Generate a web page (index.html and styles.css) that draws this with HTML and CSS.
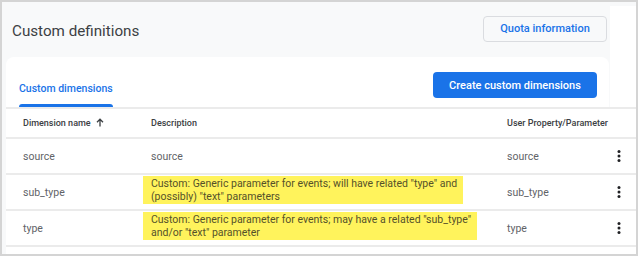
FILE: index.html
```html
<!DOCTYPE html>
<html>
<head>
<meta charset="utf-8">
<link rel="stylesheet" href="styles.css">
</head>
<body>
<div class="frame">
  <div class="top">
    <div class="main">
      <div class="head">
        <h1 class="title">Custom definitions</h1>
        <button class="btn-outline">Quota information</button>
      </div>
      <div class="card">
        <div class="tab">
          <span class="tab-label">Custom dimensions</span>
          <span class="tab-line"></span>
        </div>
        <button class="btn-primary">Create custom dimensions</button>
      </div>
    </div>
    <div class="strip"></div>
  </div>
  <div class="table">
    <div class="row row-head">
      <div class="cell">Dimension name
        <svg class="arrow" width="8" height="9" viewBox="0 0 8 9"><path d="M4 8.5V1.5M1 4.2L4 1.2L7 4.2" fill="none" stroke="#3c4043" stroke-width="1.3"/></svg>
      </div>
      <div class="cell">Description</div>
      <div class="cell">User Property/Parameter</div>
      <div class="cell"></div>
    </div>
    <div class="row">
      <div class="cell">source</div>
      <div class="cell">source</div>
      <div class="cell">source</div>
      <div class="cell kebab"><svg width="4" height="12" viewBox="0 0 4 12"><circle cx="2" cy="1.6" r="1.5"/><circle cx="2" cy="6" r="1.5"/><circle cx="2" cy="10.4" r="1.5"/></svg></div>
    </div>
    <div class="row">
      <div class="cell">sub_type</div>
      <div class="cell"><span class="hl">Custom: Generic parameter for events; will have related "type" and<br>(possibly) "text" parameters</span></div>
      <div class="cell">sub_type</div>
      <div class="cell kebab"><svg width="4" height="12" viewBox="0 0 4 12"><circle cx="2" cy="1.6" r="1.5"/><circle cx="2" cy="6" r="1.5"/><circle cx="2" cy="10.4" r="1.5"/></svg></div>
    </div>
    <div class="row">
      <div class="cell">type</div>
      <div class="cell"><span class="hl">Custom: Generic parameter for events; may have a related "sub_type"<br>and/or "text" parameter</span></div>
      <div class="cell">type</div>
      <div class="cell kebab"><svg width="4" height="12" viewBox="0 0 4 12"><circle cx="2" cy="1.6" r="1.5"/><circle cx="2" cy="6" r="1.5"/><circle cx="2" cy="10.4" r="1.5"/></svg></div>
    </div>
  </div>
</div>
</body>
</html>
```

FILE: styles.css
```css
* { box-sizing: border-box; }
html, body { margin: 0; padding: 0; background: #ffffff; }
body { font-family: Roboto, "Liberation Sans", sans-serif; }

.frame {
  width: 638px;
  height: 256px;
  border: 2px solid #d4d4d4;
  background: #f8f9fa;
  padding-left: 4px;
  display: flex;
  flex-direction: column;
  overflow: hidden;
}

.top { display: flex; }
.main { width: 603px; }
.strip {
  flex: 1;
  background: #ffffff;
  margin-top: 4px;
  margin-left: 1px;
}

.head {
  height: 55px;
  display: flex;
  align-items: center;
  justify-content: space-between;
  padding: 0 2px 0 6px;
}
.title {
  margin: 0;
  font-family: Roboto, sans-serif;
  font-weight: 400;
  font-size: 15.2px;
  color: #3c4043;
  padding-top: 3px;
}
.btn-outline {
  width: 124px;
  height: 26px;
  margin-top: -2px;
  background: #f8f9fa;
  border: 1px solid #dadce0;
  border-radius: 4px;
  color: #1a73e8;
  font-family: Roboto, sans-serif;
  font-weight: 500;
  font-size: 11px;
  padding: 0;
}

.card {
  height: 50px;
  background: #ffffff;
  border-radius: 8px 8px 0 0;
  display: flex;
  justify-content: space-between;
  align-items: flex-end;
  padding: 0 12px 0 12px;
}
.tab {
  display: flex;
  flex-direction: column;
  align-items: stretch;
}
.tab-label {
  line-height: 14px;
  font-size: 10.5px;
  font-weight: 500;
  color: #1a73e8;
  padding: 0 1px;
}
.tab-line {
  display: block;
  height: 3px;
  margin: 8px 1px 0 1px;
  border-radius: 3px 3px 0 0;
  background: #1a73e8;
}
.btn-primary {
  align-self: flex-start;
  margin-top: 15px;
  width: 164px;
  height: 26px;
  border: none;
  border-radius: 4px;
  background: #1a73e8;
  color: #ffffff;
  font-family: Roboto, sans-serif;
  font-weight: 500;
  font-size: 11px;
  padding: 0;
}

.table {
  flex: 1;
  background: #ffffff;
}
.row {
  display: grid;
  grid-template-columns: 128px 356px 100px 24px;
  padding-left: 17px;
  border-top: 2px solid #ebebeb;
  height: 36px;
  align-items: center;
  font-size: 10.5px;
  color: #5f6368;
}
.row:last-child { border-bottom: 2px solid #ebebeb; height: 38px; }
.row-head {
  height: 30px;
  font-size: 9px;
  font-weight: 500;
  color: #3c4043;
}
.cell { white-space: nowrap; }
.arrow { margin-left: 3px; vertical-align: -1px; }
.hl {
  display: inline-block;
  background: #fff35c;
  color: #55512a;
  line-height: 13px;
  padding: 1px 6px 1px 8px;
  margin-left: -8px;
  margin-top: -5px;
}
.kebab { display: flex; justify-content: center; fill: #202124; }
```
